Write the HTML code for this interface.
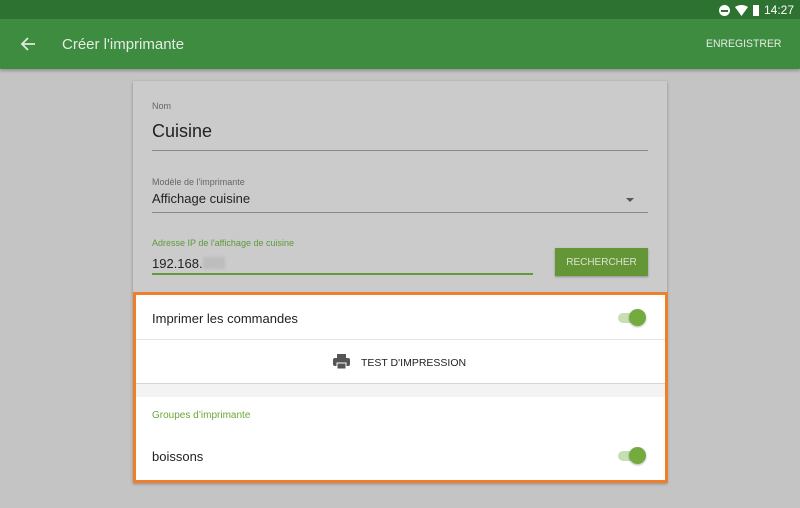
<!DOCTYPE html>
<html><head><style>
*{margin:0;padding:0;box-sizing:border-box}
body{width:800px;height:508px;background:#c4c4c4;font-family:"Liberation Sans",sans-serif;position:relative;overflow:hidden}
.abs{position:absolute}
</style></head><body>
<div class="abs" style="left:0;top:0;width:800px;height:19px;background:#2e7232"></div>
<div class="abs" style="right:6px;top:3px;font-size:12px;color:#fff;display:flex;align-items:center;gap:5px">
<span style="width:11px;height:11px;border-radius:50%;background:#fff;display:inline-block;position:relative"><span style="position:absolute;left:2px;top:5px;width:7px;height:2px;background:#2e7232"></span></span>
<svg width="13" height="11" viewBox="0 0 13 11"><path d="M0 2 Q6.5 -2 13 2 L6.5 11Z" fill="#fff"/></svg>
<span style="width:6px;height:11px;background:#fff;display:inline-block"></span>
<span>14:27</span></div>
<div class="abs" style="left:0;top:19px;width:800px;height:50px;background:#3d8c40;box-shadow:0 2px 3px rgba(0,0,0,.25)"></div>
<svg class="abs" style="left:20px;top:36px" width="16" height="16" viewBox="0 0 16 16"><path d="M15 8H2M8 2L2 8l6 6" stroke="#dfe9df" stroke-width="1.8" fill="none"/></svg>
<div class="abs" style="left:62px;top:36px;font-size:15px;color:#e4ece4">Créer l'imprimante</div>
<div class="abs" style="right:19px;top:38px;font-size:11px;color:#e4ece4;transform:scaleX(.95);transform-origin:right">ENREGISTRER</div>

<div class="abs" style="left:133px;top:81px;width:534px;height:402px;background:#cbcbcb;box-shadow:0 1px 3px rgba(0,0,0,.3)"></div>
<div class="abs" style="left:152px;top:101px;font-size:9px;color:#666">Nom</div>
<div class="abs" style="left:152px;top:121px;font-size:18px;color:#222">Cuisine</div>
<div class="abs" style="left:152px;top:150px;width:496px;height:1px;background:#8a8a8a"></div>
<div class="abs" style="left:152px;top:177px;font-size:9px;color:#666">Modèle de l'imprimante</div>
<div class="abs" style="left:152px;top:191px;font-size:13px;color:#222">Affichage cuisine</div>
<div class="abs" style="left:626px;top:198px;width:0;height:0;border-left:4px solid transparent;border-right:4px solid transparent;border-top:4px solid #555"></div>
<div class="abs" style="left:152px;top:212px;width:496px;height:1px;background:#8a8a8a"></div>
<div class="abs" style="left:152px;top:238px;font-size:9px;color:#5d9a3a">Adresse IP de l'affichage de cuisine</div>
<div class="abs" style="left:152px;top:256px;font-size:13px;color:#222">192.168.<span style="display:inline-block;width:22px;height:12px;background:#bdbdbd;vertical-align:-1px;filter:blur(1px)"></span></div>
<div class="abs" style="left:152px;top:273px;width:381px;height:2px;background:#659a3a"></div>
<div class="abs" style="left:555px;top:248px;width:93px;height:28px;background:#649537;color:#d9e4d0;font-size:10px;text-align:center;line-height:30px;box-shadow:0 1px 2px rgba(0,0,0,.3)">RECHERCHER</div>

<div class="abs" style="left:133px;top:292px;width:535px;height:191px;border:3px solid #f07f2c;background:#fff"></div>
<div class="abs" style="left:136px;top:295px;width:529px;height:45px;background:#fff;border-bottom:1px solid #e4e4e4"></div>
<div class="abs" style="left:152px;top:311px;font-size:13px;color:#222">Imprimer les commandes</div>
<div class="abs" style="left:618px;top:313px;width:26px;height:10px;border-radius:5px;background:#c6e0b4"></div>
<div class="abs" style="left:629px;top:309px;width:17px;height:17px;border-radius:50%;background:#74ab3e;box-shadow:0 1px 2px rgba(0,0,0,.3)"></div>
<svg class="abs" style="left:333px;top:354px" width="17" height="16" viewBox="0 0 17 16"><rect x="4" y="0" width="9" height="4" fill="#555"/><rect x="0" y="4" width="17" height="8" rx="2" fill="#555"/><rect x="4" y="9" width="9" height="6" fill="#555" stroke="#fff" stroke-width="1"/></svg>
<div class="abs" style="left:361px;top:357px;font-size:10.5px;color:#222">TEST D'IMPRESSION</div>
<div class="abs" style="left:136px;top:383px;width:529px;height:14px;background:#f3f3f3;border-top:1px solid #d4d4d4"></div>
<div class="abs" style="left:152px;top:410px;font-size:10px;color:#6aa73a">Groupes d’imprimante</div>
<div class="abs" style="left:152px;top:449px;font-size:13px;color:#222">boissons</div>
<div class="abs" style="left:618px;top:451px;width:26px;height:10px;border-radius:5px;background:#c6e0b4"></div>
<div class="abs" style="left:629px;top:447px;width:17px;height:17px;border-radius:50%;background:#74ab3e;box-shadow:0 1px 2px rgba(0,0,0,.3)"></div>
</body></html>
